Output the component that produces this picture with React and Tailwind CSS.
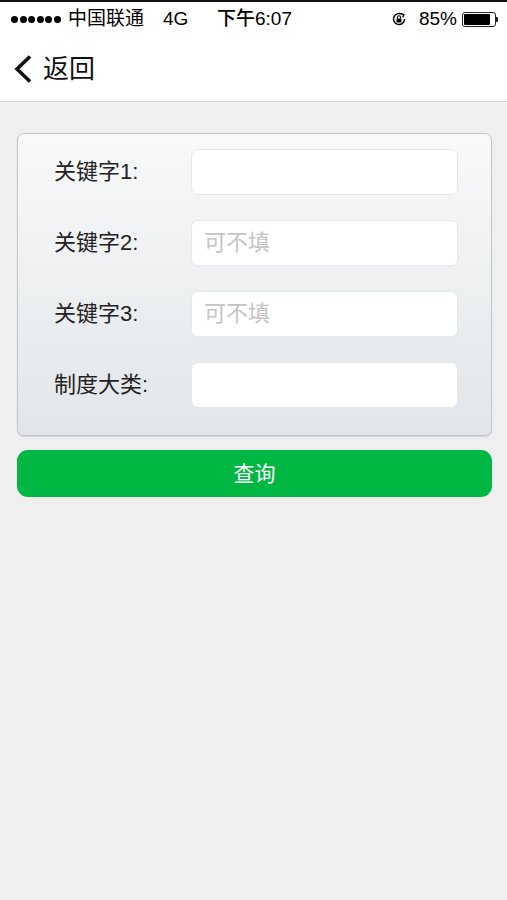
import React from "react";

const font = { fontFamily: '"Liberation Sans", "Noto Sans CJK SC", sans-serif' };

function Row({ label, placeholder }) {
  return (
    <div className="flex items-center h-[46px]">
      <div className="w-[173px] shrink-0 pl-[36px] text-[22px] text-[#222] leading-none whitespace-nowrap">{label}</div>
      <div className="w-[267px] shrink-0 h-[46px] rounded-[7px] bg-white border border-[#e6e9eb] flex items-center px-[12px] text-[22px] text-[#c4c4c4] leading-none">
        {placeholder}
      </div>
    </div>
  );
}

export default function App() {
  return (
    <div className="w-[507px] h-[900px] bg-[#efefef] flex flex-col" style={font}>
      <div className="h-[2px] bg-[#111]" />
      <div className="bg-white h-[34px] flex items-center pl-[11px] pr-[9px] text-[19px] text-black relative">
        <span className="flex gap-[1.6px]">
          {[0, 1, 2, 3, 4, 5].map((i) => (
            <span key={i} className="w-[7px] h-[7px] rounded-full bg-black inline-block" />
          ))}
        </span>
        <span className="ml-[7px]">中国联通</span>
        <span className="ml-[19px]">4G</span>
        <span className="absolute left-[217px] font-medium">下午6:07</span>
        <div className="ml-auto flex items-center">
          <svg width="16" height="16" viewBox="0 0 16 16" className="mr-[12px]">
            <path d="M13.5 8 A5.5 5.5 0 1 1 11.5 3.8" fill="none" stroke="#000" strokeWidth="1.4" />
            <path d="M10 2.5 L13 3.6 L11.6 6.4" fill="none" stroke="#000" strokeWidth="1.3" />
            <rect x="5.5" y="7.5" width="5" height="4" fill="#000" />
            <path d="M6.5 7.5 V6.2 a1.5 1.5 0 0 1 3 0 V7.5" fill="none" stroke="#000" strokeWidth="1.1" />
          </svg>
          <span>85%</span>
          <div className="ml-[5px] flex items-center">
            <div className="w-[34px] h-[15px] border border-[#222] rounded-[3px] p-[1px]">
              <div className="h-full w-[85%] bg-black rounded-[1px]" />
            </div>
            <div className="w-[2px] h-[5px] bg-[#222] rounded-r-[1px]" />
          </div>
        </div>
      </div>
      <div className="bg-white h-[66px] flex items-center border-b border-[#d9d9d9]">
        <svg width="20" height="30" viewBox="0 0 20 30" className="ml-[13px]">
          <path d="M17 2.5 L4 15 L17 27.5" fill="none" stroke="#111" strokeWidth="3.6" strokeLinecap="butt" />
        </svg>
        <span className="ml-[10px] text-[26px] text-[#111] leading-none">返回</span>
      </div>
      <div className="pl-[17px] pr-[15px] pt-[31px]">
        <div className="rounded-[7px] border border-[#c3c7cb] bg-gradient-to-b from-[#f8f9f9] to-[#e2e6e9] pt-[15px] pb-[27px] flex flex-col gap-[25px] shadow-[0_1px_1px_rgba(0,0,0,0.12)]">
          <Row label="关键字1:" placeholder="" />
          <Row label="关键字2:" placeholder="可不填" />
          <Row label="关键字3:" placeholder="可不填" />
          <Row label="制度大类:" placeholder="" />
        </div>
        <div className="mt-[14px] h-[47px] rounded-[11px] bg-[#00b744] flex items-center justify-center text-white text-[21px]">
          查询
        </div>
      </div>
    </div>
  );
}
